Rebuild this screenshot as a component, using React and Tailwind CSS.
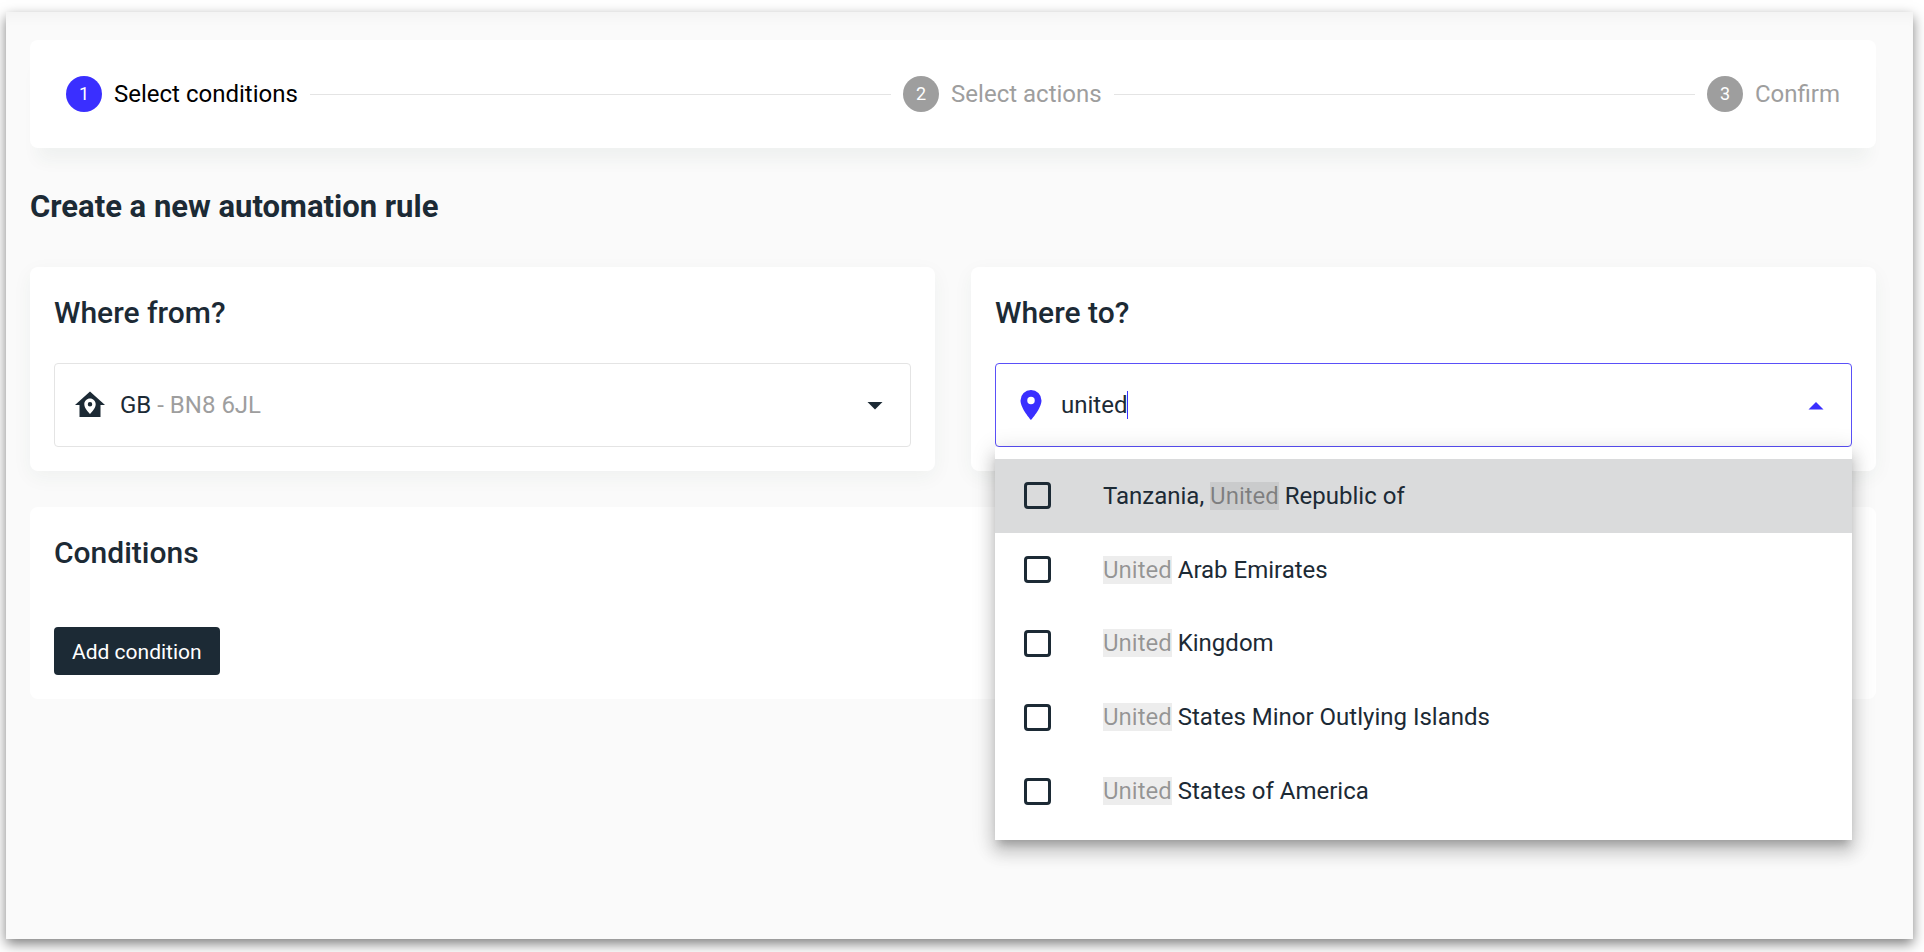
import React, { useState } from "react";

const countries = [
  "Tanzania, United Republic of",
  "United Arab Emirates",
  "United Kingdom",
  "United States Minor Outlying Islands",
  "United States of America",
];

const steps = ["Select conditions", "Select actions", "Confirm"];

const Icon = ({ path, className = "" }) => (
  <svg viewBox="0 0 24 24" className={`size-9 shrink-0 fill-current ${className}`} aria-hidden="true">
    <path fillRule="evenodd" d={path} />
  </svg>
);

const homeMarker =
  "M12 3L2 12H5V20H19V12H22L12 3M12 7.7C14.1 7.7 15.8 9.4 15.8 11.5C15.8 14.5 12 18 12 18S8.2 14.5 8.2 11.5C8.2 9.4 9.9 7.7 12 7.7M12 10A1.5 1.5 0 0 0 10.5 11.5A1.5 1.5 0 0 0 12 13A1.5 1.5 0 0 0 13.5 11.5A1.5 1.5 0 0 0 12 10Z";
const mapMarker =
  "M12 11.5A2.5 2.5 0 0 1 9.5 9A2.5 2.5 0 0 1 12 6.5A2.5 2.5 0 0 1 14.5 9A2.5 2.5 0 0 1 12 11.5M12 2A7 7 0 0 0 5 9C5 14.25 12 22 12 22S19 14.25 19 9A7 7 0 0 0 12 2Z";

const Stepper = ({ active }) => (
  <ol className="flex items-center gap-3 h-27 px-9 bg-white rounded-lg shadow-[0_20px_16px_-8px_rgba(30,70,60,0.05)]">
    {steps.map((step, i) => (
      <React.Fragment key={step}>
        {i > 0 && <li className="flex-1 h-px bg-[#e4e4e4]" aria-hidden="true" />}
        <li className="flex items-center gap-3">
          <span
            className={`flex items-center justify-center size-9 rounded-full text-lg text-white ${
              i === active ? "bg-[#3a2fff]" : "bg-[#9e9e9e]"
            }`}
          >
            {i + 1}
          </span>
          <span className={`text-2xl ${i === active ? "text-black" : "text-[#9e9e9e]"}`}>{step}</span>
        </li>
      </React.Fragment>
    ))}
  </ol>
);

// wraps the part of the name that matches the search in a grey mark
const Highlight = ({ text, query }) => {
  const start = text.toLowerCase().indexOf(query.toLowerCase());
  if (!query || start < 0) return text;
  const end = start + query.length;
  return (
    <>
      {text.slice(0, start)}
      <mark className="bg-black/7 text-black/38">{text.slice(start, end)}</mark>
      {text.slice(end)}
    </>
  );
};

const Card = ({ title, className = "", children }) => (
  <section className={`bg-white rounded-lg p-6 ${className}`}>
    <h2 className="text-3xl leading-11 font-medium">{title}</h2>
    {children}
  </section>
);

const WhereFrom = () => (
  <Card title="Where from?" className="shadow-[0_6px_20px_rgba(30,70,60,0.05)]">
    <div className="flex items-center mt-7 h-21 px-[17px] border border-[#e4e4e4] rounded-sm text-2xl">
      <Icon path={homeMarker} />
      <label htmlFor="from" className="ml-3 whitespace-pre">
        GB<span className="text-[#9e9e9e]"> - </span>
      </label>
      <select id="from" className="flex-1 appearance-none bg-transparent text-[#9e9e9e] outline-none">
        <option>BN8 6JL</option>
      </select>
      <Icon path="M7 10L12 15L17 10H7Z" />
    </div>
  </Card>
);

const WhereTo = () => {
  const [query, setQuery] = useState("united");
  const [selected, setSelected] = useState([]);
  const matches = countries.filter((c) => c.toLowerCase().includes(query.toLowerCase()));

  const toggle = (country) =>
    setSelected(
      selected.includes(country) ? selected.filter((c) => c !== country) : [...selected, country]
    );

  return (
    <Card title="Where to?" className="shadow-[0_6px_20px_rgba(30,70,60,0.05)]">
      <div className="relative mt-7">
        <div className="flex items-center h-21 px-[17px] border border-[#5a50f8] rounded-sm text-2xl">
          <Icon path={mapMarker} className="text-[#3a2fff]" />
          <input
            type="text"
            aria-label="Where to?"
            value={query}
            onChange={(e) => setQuery(e.target.value)}
            className="ml-3 field-sizing-content caret-transparent outline-none"
          />
          <span className="w-px h-7 bg-[#3a2fff]" />
          <Icon path="M7 15L12 10L17 15H7Z" className="ml-auto text-[#3a2fff]" />
        </div>
        <ul className="absolute z-10 top-full inset-x-0 flex flex-col h-[393px] py-3 bg-white text-2xl shadow-[0_8px_8px_-4px_rgba(0,0,0,0.2),0_12px_15px_2px_rgba(0,0,0,0.14),0_4px_21px_3px_rgba(0,0,0,0.12)]">
          {matches.map((country, i) => (
            <li key={country} className={`flex-1 ${i === 0 ? "bg-[#dadbdc]" : ""}`}>
              <label className="flex items-center gap-13 h-full pl-[29px]">
                <input
                  type="checkbox"
                  checked={selected.includes(country)}
                  onChange={() => toggle(country)}
                  className="appearance-none size-[27px] border-3 border-[#1c2a35] rounded-sm checked:bg-[#1c2a35]"
                />
                <span>
                  <Highlight text={country} query={query} />
                </span>
              </label>
            </li>
          ))}
        </ul>
      </div>
    </Card>
  );
};

export default function App() {
  return (
    <div className="flex min-h-screen pt-3 pb-[13px] pl-1.5 pr-[11px] bg-white overflow-hidden font-[Roboto,sans-serif] text-[#1c2a35]">
      <main className="flex-1 pt-7 pl-6 pr-[37px] bg-[#fafafa] shadow-[0_5px_12px_rgba(0,0,0,0.5),inset_0_12px_12px_-6px_rgba(0,0,0,0.03)]">
        <Stepper active={0} />
        <h1 className="mt-[39px] mb-10 text-[31px] leading-10 font-bold">Create a new automation rule</h1>
        <div className="grid grid-cols-2 gap-9">
          <WhereFrom />
          <WhereTo />
        </div>
        <Card title="Conditions" className="mt-9">
          <button className="block mt-13 h-12 px-[18px] pt-[3px] rounded-sm bg-[#1c2a35] text-[21px] text-white">
            Add condition
          </button>
        </Card>
      </main>
    </div>
  );
}
